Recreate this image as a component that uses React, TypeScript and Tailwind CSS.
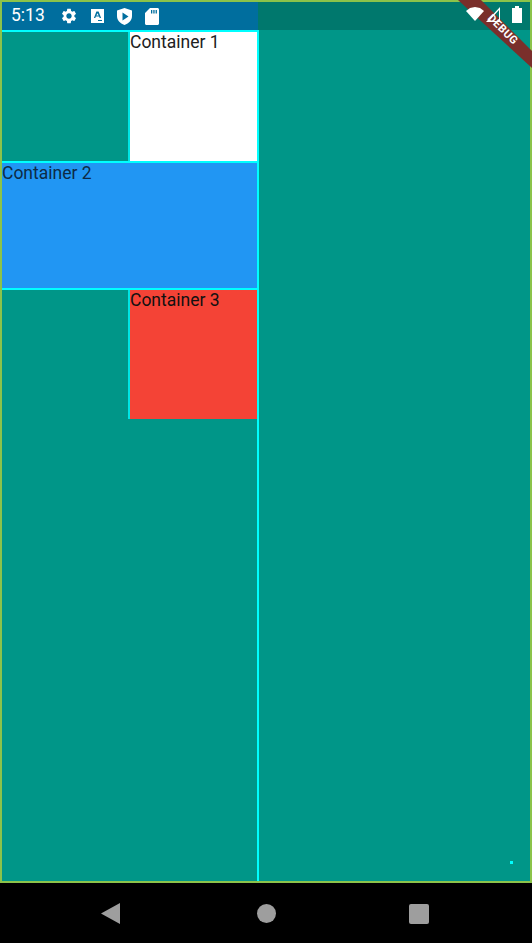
import React from 'react';

const font = { fontFamily: 'Roboto, sans-serif' };

function StatusIcons() {
  return (
    <div className="flex items-center gap-[13px] ml-[15px]">
      <svg width="18" height="18" viewBox="0 0 24 24" fill="#fff">
        <path d="M19.14 12.94c.04-.3.06-.61.06-.94 0-.32-.02-.64-.07-.94l2.03-1.58c.18-.14.23-.41.12-.61l-1.92-3.32c-.12-.22-.37-.29-.59-.22l-2.39.96c-.5-.38-1.03-.7-1.62-.94l-.36-2.54c-.04-.24-.24-.41-.48-.41h-3.84c-.24 0-.43.17-.47.41l-.36 2.54c-.59.24-1.13.57-1.62.94l-2.39-.96c-.22-.08-.47 0-.59.22L2.74 8.87c-.12.21-.08.47.12.61l2.03 1.58c-.05.3-.09.63-.09.94s.02.64.07.94l-2.03 1.58c-.18.14-.23.41-.12.61l1.92 3.32c.12.22.37.29.59.22l2.39-.96c.5.38 1.03.7 1.62.94l.36 2.54c.05.24.24.41.48.41h3.84c.24 0 .44-.17.47-.41l.36-2.54c.59-.24 1.13-.56 1.62-.94l2.39.96c.22.08.47 0 .59-.22l1.92-3.32c.12-.22.07-.47-.12-.61l-2.01-1.58zM12 15.6c-1.98 0-3.6-1.62-3.6-3.6s1.62-3.6 3.6-3.6 3.6 1.62 3.6 3.6-1.62 3.6-3.6 3.6z" />
      </svg>
      <svg width="13" height="14" viewBox="0 0 13 14">
        <path fillRule="evenodd" fill="#fff" d="M0 0h13v14H0zM5.4 2.5 2.9 9h1.4l.5-1.4h3.3L8.7 9h1.4L7.600 2.500zM6.500 4.200l1.200 2.300H5.300zM7 11v1h4v-1z" />
      </svg>
      <svg width="15" height="17" viewBox="0 0 15 17">
        <path fillRule="evenodd" fill="#fff" d="M7.500 0 15 2.500v5.500c0 4-3 7.500-7.500 9C3 15.500 0 12 0 8V2.500zM5.500 4.500v8l6-4z" />
      </svg>
      <svg width="14" height="17" viewBox="0 0 14 17">
        <path fillRule="evenodd" fill="#fff" d="M5 0h7.500c.8 0 1.500.7 1.500 1.500v14c0 .8-.7 1.500-1.500 1.500h-11C.7 17 0 16.300 0 15.500V5zM6 2v3.500h1.300V2zM8.300 2v3.500h1.300V2zM10.600 2v3.500h1.300V2z" />
      </svg>
    </div>
  );
}

function Box({ bg, label, light }: { bg: string; label: string; light?: boolean }) {
  return (
    <div className={`w-[129px] h-[129px] ml-auto border-l-2 border-[#00e5e5] ${bg}`}>
      <span className={`block text-[17.5px] leading-[20px] ${light ? 'text-[#212121]' : 'text-[#111]'}`}>{label}</span>
    </div>
  );
}

export default function App() {
  return (
    <div className="relative w-[532px] h-[943px] bg-black overflow-hidden" style={font}>
      <div className="h-[883px] border-2 border-[#8bc34a] bg-[#009688] flex flex-col">
        <div className="h-[28px] flex bg-[#00786d] shrink-0">
          <div className="w-[256px] h-full bg-[#006e9e] flex items-center text-white">
            <span className="ml-[9px] text-[17.5px] leading-none">5:13</span>
            <StatusIcons />
          </div>
        </div>
        <div className="flex-1 flex min-h-0">
          <div className="w-[257px] border-r-2 border-[#00ffff]">
            <div className="border-t-2 border-[#00ffff] bg-[#009688]">
              <Box bg="bg-white" label="Container 1" light />
            </div>
            <div className="h-[129px] border-y-2 border-[#00ffff] bg-[#2196f3] text-[17.5px] leading-[20px] text-[#0d2b45] -mt-0">
              Container 2
            </div>
            <Box bg="bg-[#f44336]" label="Container 3" />
          </div>
        </div>
      </div>
      <div className="absolute left-[510px] top-[861px] w-[3px] h-[3px] bg-[#00ffff]" />
      <svg className="absolute top-0 right-0" width="80" height="70" viewBox="0 0 80 70">
        <polygon points="6,0 29,0 80,51 80,68" fill="#7a2f2b" />
      </svg>
      <span className="absolute top-[24px] left-[484px] text-[11px] font-bold text-white leading-none rotate-45 tracking-[0.5px]">DEBUG</span>
      <div className="absolute top-[7px] left-[466px] flex items-start">
        <svg width="18" height="14" viewBox="0 0 18 14"><polygon points="0,4 4,1 9,0 14,1 18,4 9,14" fill="#fff" /></svg>
      </div>
      <svg className="absolute top-[7px] left-[486px]" width="14" height="15" viewBox="0 0 14 15">
        <path fillRule="evenodd" d="M14 0v15H0zM13 3 3 14h10z" fill="#fff" />
      </svg>
      <svg className="absolute top-[6px] left-[512px]" width="10" height="17" viewBox="0 0 10 17">
        <path d="M3 0h4v2h3v15H0V2h3z" fill="#fff" />
      </svg>
      <div className="absolute bottom-0 left-0 right-0 h-[60px] flex items-center">
        <svg className="absolute left-[101px] top-[20px]" width="20" height="21" viewBox="0 0 20 21"><polygon points="0,10.500 19,0 19,21" fill="#9e9e9e" /></svg>
        <div className="absolute left-[257px] top-[21px] w-[19px] h-[19px] rounded-full bg-[#9e9e9e]" />
        <div className="absolute left-[409px] top-[21px] w-[20px] h-[20px] rounded-[2px] bg-[#9e9e9e]" />
      </div>
    </div>
  );
}
